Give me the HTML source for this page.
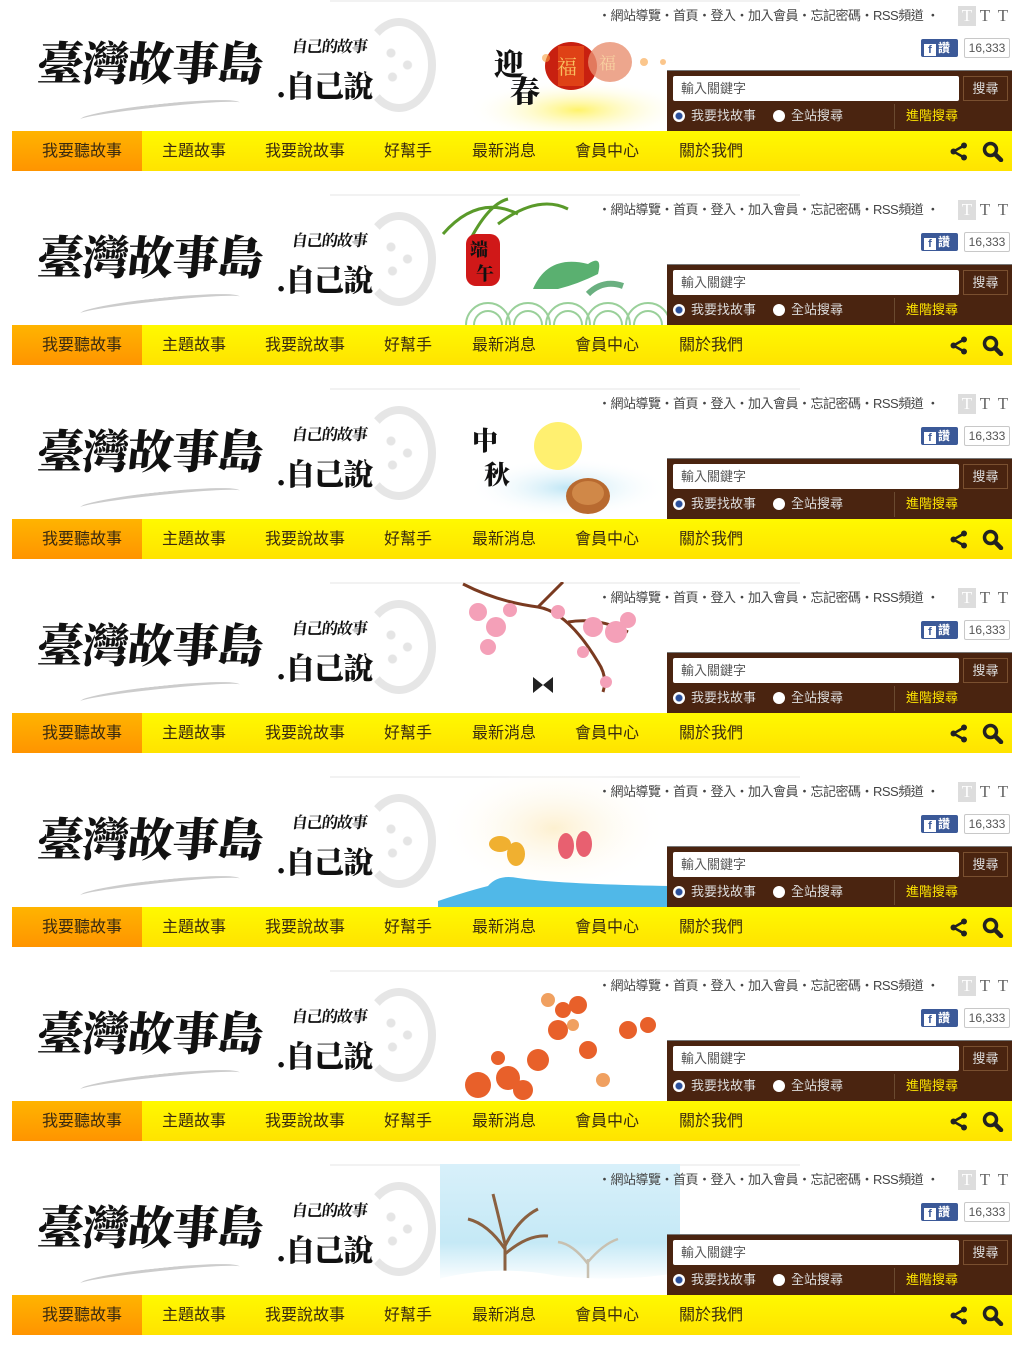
<!DOCTYPE html>
<html><head><meta charset="utf-8"><style>
*{margin:0;padding:0;box-sizing:border-box}
body{width:1024px;height:1336px;background:#fff;font-family:"Liberation Sans","Noto Sans CJK TC",sans-serif;position:relative;overflow:hidden}
.b{position:absolute;left:0;width:1024px;height:194px}
.topline{position:absolute;left:330px;top:0;width:470px;height:2px;background:#f2f2f2}
.deco{position:absolute;left:438px;top:0;width:232px;height:131px;overflow:hidden}
.links{position:absolute;left:598px;top:5px;font-size:13px;color:#444;white-space:nowrap;letter-spacing:-0.5px}
.ttt{position:absolute;left:958px;top:6px;height:18px;font-family:"Liberation Serif",serif;font-size:17px;color:#666}
.ttt span{display:inline-block;width:18px;text-align:center}
.ttt span.a{background:#ddd;color:#fff}
.fb{position:absolute;left:921px;top:39px;width:37px;height:18px;background:#3b5998;border-radius:2px;color:#fff;font-size:12px;font-weight:bold;line-height:18px;padding-left:3px}
.fb i{display:inline-block;width:12px;height:12px;background:#fff;color:#3b5998;font-style:normal;font-size:11px;line-height:13px;text-align:center;vertical-align:-1px;margin-right:2px}
.cnt{position:absolute;left:964px;top:38px;width:46px;height:20px;border:1px solid #c8c8c8;border-radius:2px;font-size:12px;color:#555;line-height:18px;text-align:center}
.sp{position:absolute;left:667px;top:70px;width:345px;height:61px;background:#4a2410;border-top:1px solid #777}
.inp{position:absolute;left:6px;top:5px;width:286px;height:25px;background:#fff;border-radius:2px;font-size:13px;color:#555;line-height:25px;padding-left:8px}
.btn{position:absolute;left:296px;top:5px;width:45px;height:25px;border:1px solid #7a5030;font-size:13px;color:#ddd;line-height:23px;text-align:center}
.r{position:absolute;top:37px;font-size:13px;color:#ddd;line-height:16px}
.r i{display:inline-block;width:12px;height:12px;border-radius:50%;background:#fff;vertical-align:-2px;margin-right:6px}
.r i.on{background:radial-gradient(circle,#2a4f9a 0 3px,#fff 4px)}
.div{position:absolute;left:227px;top:33px;width:1px;height:25px;background:#6a4a30}
.adv{position:absolute;left:239px;top:37px;font-size:13px;color:#ffe600;line-height:16px}
.nav{position:absolute;left:12px;top:131px;width:1000px;height:40px;background:linear-gradient(#fff900,#ffe300)}
.nav .o{position:absolute;left:0;top:0;width:130px;height:40px;background:linear-gradient(#ffb400,#ff9400)}
.nav span{position:absolute;top:11px;font-size:16px;color:#3a2a10;line-height:20px}
.logo{position:absolute;left:38px;top:30px;font-family:"Noto Serif CJK SC",serif;font-weight:900;font-size:46px;line-height:62px;color:#111;letter-spacing:-1px;transform:skewX(-6deg);white-space:nowrap}
.logo2{position:absolute;left:276px;top:64px;font-family:"Noto Serif CJK SC",serif;font-weight:900;font-size:30px;line-height:40px;color:#111;letter-spacing:-1px;white-space:nowrap}
.logo3{position:absolute;left:292px;top:34px;font-family:"Noto Serif CJK SC",serif;font-weight:700;font-size:16px;line-height:24px;color:#111;letter-spacing:-1px;transform:skewX(-8deg)}
.circ{position:absolute;left:362px;top:18px;width:74px;height:94px;border:8px solid #e6e6e6;border-radius:50%;border-left-color:transparent}
.dots{position:absolute;left:385px;top:45px;width:30px;height:40px;background:radial-gradient(circle at 20% 20%,#e5e5e5 4px,transparent 5px),radial-gradient(circle at 75% 50%,#e5e5e5 4px,transparent 5px),radial-gradient(circle at 25% 80%,#e5e5e5 4px,transparent 5px)}
.swoosh{position:absolute;left:80px;top:104px;width:160px;height:14px;border-radius:50%;border-top:3px solid #ccc;transform:rotate(-6deg)}
</style></head><body>

<div class="b" style="top:0">
<div class="topline"></div>
<div class="deco"><svg width="232" height="131">
<defs><radialGradient id="g1"><stop offset="0" stop-color="#fff36a"/><stop offset="1" stop-color="#fff" stop-opacity="0"/></radialGradient></defs>
<ellipse cx="140" cy="110" rx="110" ry="30" fill="url(#g1)"/>
<text x="56" y="75" font-family="Noto Serif CJK SC" font-weight="900" font-size="30" fill="#111">迎</text>
<text x="72" y="102" font-family="Noto Serif CJK SC" font-weight="900" font-size="30" fill="#111">春</text>
<ellipse cx="133" cy="66" rx="26" ry="24" fill="#c82010"/><rect x="120" y="46" width="26" height="40" fill="#e8501a" opacity=".7"/>
<text x="119" y="74" font-size="20" fill="#f8c060" font-family="Noto Serif CJK SC">福</text>
<ellipse cx="172" cy="62" rx="22" ry="20" fill="#e89070" opacity=".8"/>
<text x="161" y="69" font-size="17" fill="#f8d0a0" font-family="Noto Serif CJK SC">福</text>
<circle cx="108" cy="58" r="4" fill="#f8a040" opacity=".6"/><circle cx="206" cy="62" r="4" fill="#f8a040" opacity=".6"/><circle cx="225" cy="62" r="3" fill="#f8a040" opacity=".6"/>
</svg></div>
<div class="links">・網站導覽・首頁・登入・加入會員・忘記密碼・RSS頻道 ・</div>
<div class="ttt"><span class="a">T</span><span>T</span><span>T</span></div>
<div class="fb"><i>f</i>讚</div><div class="cnt">16,333</div>
<div class="circ"></div><div class="dots"></div><div class="swoosh"></div>
<div class="logo">臺灣故事島</div><div class="logo3">自己的故事</div><div class="logo2">.自己說</div>
<div class="sp"><div class="inp">輸入關鍵字</div><div class="btn">搜尋</div><div class="r" style="left:6px"><i class="on"></i>我要找故事</div><div class="r" style="left:106px"><i></i>全站搜尋</div><div class="div"></div><div class="adv">進階搜尋</div></div>
<div class="nav"><div class="o"></div><span style="left:30px">我要聽故事</span><span style="left:150px">主題故事</span><span style="left:253px">我要說故事</span><span style="left:372px">好幫手</span><span style="left:460px">最新消息</span><span style="left:563px">會員中心</span><span style="left:667px">關於我們</span>
<svg style="position:absolute;left:938px;top:11px" width="18" height="19"><circle cx="14" cy="3.5" r="3" fill="#222"/><circle cx="3.5" cy="9.5" r="3" fill="#222"/><circle cx="14" cy="15.5" r="3" fill="#222"/><path d="M14 3.5L3.5 9.5L14 15.5" stroke="#222" stroke-width="2.5" fill="none"/></svg>
<svg style="position:absolute;left:970px;top:10px" width="22" height="21"><circle cx="8.5" cy="8.5" r="6" stroke="#222" stroke-width="3.5" fill="none"/><path d="M13 13L19 19" stroke="#222" stroke-width="4.5" stroke-linecap="round"/></svg></div>
</div>

<div class="b" style="top:194px">
<div class="topline"></div>
<div class="deco"><svg width="232" height="131">
<path d="M5 40Q40 0 80 20M30 50Q50 10 70 5M60 30Q100 0 130 15" stroke="#5a9a2a" stroke-width="3" fill="none"/>
<rect x="28" y="40" width="34" height="52" rx="10" fill="#d01818"/>
<text x="32" y="62" font-size="18" fill="#111" font-family="Noto Serif CJK SC" font-weight="900">端</text><text x="38" y="86" font-size="18" fill="#111" font-family="Noto Serif CJK SC" font-weight="900">午</text>
<path d="M95 95Q110 60 150 70Q165 60 160 80Q140 90 120 95Z" fill="#5ab070"/>
<path d="M150 100Q165 85 185 92" stroke="#6ab080" stroke-width="6" fill="none"/>
<g fill="none" stroke="#9ad09a" stroke-width="2"><circle cx="50" cy="131" r="22"/><circle cx="90" cy="131" r="22"/><circle cx="130" cy="131" r="22"/><circle cx="170" cy="131" r="22"/><circle cx="210" cy="131" r="22"/><circle cx="50" cy="131" r="14"/><circle cx="90" cy="131" r="14"/><circle cx="130" cy="131" r="14"/><circle cx="170" cy="131" r="14"/><circle cx="210" cy="131" r="14"/></g>
</svg></div>
<div class="links">・網站導覽・首頁・登入・加入會員・忘記密碼・RSS頻道 ・</div>
<div class="ttt"><span class="a">T</span><span>T</span><span>T</span></div>
<div class="fb"><i>f</i>讚</div><div class="cnt">16,333</div>
<div class="circ"></div><div class="dots"></div><div class="swoosh"></div>
<div class="logo">臺灣故事島</div><div class="logo3">自己的故事</div><div class="logo2">.自己說</div>
<div class="sp"><div class="inp">輸入關鍵字</div><div class="btn">搜尋</div><div class="r" style="left:6px"><i class="on"></i>我要找故事</div><div class="r" style="left:106px"><i></i>全站搜尋</div><div class="div"></div><div class="adv">進階搜尋</div></div>
<div class="nav"><div class="o"></div><span style="left:30px">我要聽故事</span><span style="left:150px">主題故事</span><span style="left:253px">我要說故事</span><span style="left:372px">好幫手</span><span style="left:460px">最新消息</span><span style="left:563px">會員中心</span><span style="left:667px">關於我們</span>
<svg style="position:absolute;left:938px;top:11px" width="18" height="19"><circle cx="14" cy="3.5" r="3" fill="#222"/><circle cx="3.5" cy="9.5" r="3" fill="#222"/><circle cx="14" cy="15.5" r="3" fill="#222"/><path d="M14 3.5L3.5 9.5L14 15.5" stroke="#222" stroke-width="2.5" fill="none"/></svg>
<svg style="position:absolute;left:970px;top:10px" width="22" height="21"><circle cx="8.5" cy="8.5" r="6" stroke="#222" stroke-width="3.5" fill="none"/><path d="M13 13L19 19" stroke="#222" stroke-width="4.5" stroke-linecap="round"/></svg></div>
</div>

<div class="b" style="top:388px">
<div class="topline"></div>
<div class="deco"><svg width="232" height="131">
<defs><radialGradient id="g3"><stop offset="0" stop-color="#bfe6f5"/><stop offset="1" stop-color="#fff" stop-opacity="0"/></radialGradient></defs>
<ellipse cx="130" cy="100" rx="100" ry="30" fill="url(#g3)"/>
<circle cx="120" cy="58" r="24" fill="#fff070"/>
<text x="34" y="62" font-size="26" fill="#111" font-family="Noto Serif CJK SC" font-weight="900">中</text><text x="46" y="96" font-size="26" fill="#111" font-family="Noto Serif CJK SC" font-weight="900">秋</text>
<ellipse cx="150" cy="108" rx="22" ry="18" fill="#b86a30"/><ellipse cx="150" cy="105" rx="16" ry="12" fill="#d08848"/>
</svg></div>
<div class="links">・網站導覽・首頁・登入・加入會員・忘記密碼・RSS頻道 ・</div>
<div class="ttt"><span class="a">T</span><span>T</span><span>T</span></div>
<div class="fb"><i>f</i>讚</div><div class="cnt">16,333</div>
<div class="circ"></div><div class="dots"></div><div class="swoosh"></div>
<div class="logo">臺灣故事島</div><div class="logo3">自己的故事</div><div class="logo2">.自己說</div>
<div class="sp"><div class="inp">輸入關鍵字</div><div class="btn">搜尋</div><div class="r" style="left:6px"><i class="on"></i>我要找故事</div><div class="r" style="left:106px"><i></i>全站搜尋</div><div class="div"></div><div class="adv">進階搜尋</div></div>
<div class="nav"><div class="o"></div><span style="left:30px">我要聽故事</span><span style="left:150px">主題故事</span><span style="left:253px">我要說故事</span><span style="left:372px">好幫手</span><span style="left:460px">最新消息</span><span style="left:563px">會員中心</span><span style="left:667px">關於我們</span>
<svg style="position:absolute;left:938px;top:11px" width="18" height="19"><circle cx="14" cy="3.5" r="3" fill="#222"/><circle cx="3.5" cy="9.5" r="3" fill="#222"/><circle cx="14" cy="15.5" r="3" fill="#222"/><path d="M14 3.5L3.5 9.5L14 15.5" stroke="#222" stroke-width="2.5" fill="none"/></svg>
<svg style="position:absolute;left:970px;top:10px" width="22" height="21"><circle cx="8.5" cy="8.5" r="6" stroke="#222" stroke-width="3.5" fill="none"/><path d="M13 13L19 19" stroke="#222" stroke-width="4.5" stroke-linecap="round"/></svg></div>
</div>

<div class="b" style="top:582px">
<div class="topline"></div>
<div class="deco"><svg width="232" height="131">
<path d="M25 2Q60 20 100 25Q130 30 160 80Q170 95 165 110M100 25Q115 10 125 0M130 40Q160 35 190 50" stroke="#7a3a20" stroke-width="3" fill="none"/>
<g fill="#f4a0b8"><circle cx="40" cy="30" r="9"/><circle cx="58" cy="45" r="10"/><circle cx="50" cy="65" r="8"/><circle cx="72" cy="28" r="7"/><circle cx="120" cy="30" r="7"/><circle cx="155" cy="45" r="10"/><circle cx="178" cy="50" r="11"/><circle cx="190" cy="38" r="8"/><circle cx="168" cy="100" r="6"/><circle cx="145" cy="70" r="6"/></g>
<path d="M95 95l10 8-10 8zM115 95l-10 8 10 8z" fill="#222"/>
</svg></div>
<div class="links">・網站導覽・首頁・登入・加入會員・忘記密碼・RSS頻道 ・</div>
<div class="ttt"><span class="a">T</span><span>T</span><span>T</span></div>
<div class="fb"><i>f</i>讚</div><div class="cnt">16,333</div>
<div class="circ"></div><div class="dots"></div><div class="swoosh"></div>
<div class="logo">臺灣故事島</div><div class="logo3">自己的故事</div><div class="logo2">.自己說</div>
<div class="sp"><div class="inp">輸入關鍵字</div><div class="btn">搜尋</div><div class="r" style="left:6px"><i class="on"></i>我要找故事</div><div class="r" style="left:106px"><i></i>全站搜尋</div><div class="div"></div><div class="adv">進階搜尋</div></div>
<div class="nav"><div class="o"></div><span style="left:30px">我要聽故事</span><span style="left:150px">主題故事</span><span style="left:253px">我要說故事</span><span style="left:372px">好幫手</span><span style="left:460px">最新消息</span><span style="left:563px">會員中心</span><span style="left:667px">關於我們</span>
<svg style="position:absolute;left:938px;top:11px" width="18" height="19"><circle cx="14" cy="3.5" r="3" fill="#222"/><circle cx="3.5" cy="9.5" r="3" fill="#222"/><circle cx="14" cy="15.5" r="3" fill="#222"/><path d="M14 3.5L3.5 9.5L14 15.5" stroke="#222" stroke-width="2.5" fill="none"/></svg>
<svg style="position:absolute;left:970px;top:10px" width="22" height="21"><circle cx="8.5" cy="8.5" r="6" stroke="#222" stroke-width="3.5" fill="none"/><path d="M13 13L19 19" stroke="#222" stroke-width="4.5" stroke-linecap="round"/></svg></div>
</div>

<div class="b" style="top:776px">
<div class="topline"></div>
<div class="deco"><svg width="232" height="131">
<defs><radialGradient id="g5" cx=".5" cy=".4"><stop offset="0" stop-color="#fdf0d0"/><stop offset="1" stop-color="#fff" stop-opacity="0"/></radialGradient></defs>
<rect width="232" height="131" fill="url(#g5)"/>
<ellipse cx="62" cy="68" rx="11" ry="8" fill="#f0b030"/><ellipse cx="78" cy="78" rx="9" ry="12" fill="#f0b030"/>
<ellipse cx="128" cy="70" rx="8" ry="13" fill="#e86070"/><ellipse cx="146" cy="68" rx="8" ry="13" fill="#e86070"/>
<path d="M0 131L0 125Q30 115 50 110Q60 98 80 102Q120 108 232 110L232 131Z" fill="#50b8e8"/>
</svg></div>
<div class="links">・網站導覽・首頁・登入・加入會員・忘記密碼・RSS頻道 ・</div>
<div class="ttt"><span class="a">T</span><span>T</span><span>T</span></div>
<div class="fb"><i>f</i>讚</div><div class="cnt">16,333</div>
<div class="circ"></div><div class="dots"></div><div class="swoosh"></div>
<div class="logo">臺灣故事島</div><div class="logo3">自己的故事</div><div class="logo2">.自己說</div>
<div class="sp"><div class="inp">輸入關鍵字</div><div class="btn">搜尋</div><div class="r" style="left:6px"><i class="on"></i>我要找故事</div><div class="r" style="left:106px"><i></i>全站搜尋</div><div class="div"></div><div class="adv">進階搜尋</div></div>
<div class="nav"><div class="o"></div><span style="left:30px">我要聽故事</span><span style="left:150px">主題故事</span><span style="left:253px">我要說故事</span><span style="left:372px">好幫手</span><span style="left:460px">最新消息</span><span style="left:563px">會員中心</span><span style="left:667px">關於我們</span>
<svg style="position:absolute;left:938px;top:11px" width="18" height="19"><circle cx="14" cy="3.5" r="3" fill="#222"/><circle cx="3.5" cy="9.5" r="3" fill="#222"/><circle cx="14" cy="15.5" r="3" fill="#222"/><path d="M14 3.5L3.5 9.5L14 15.5" stroke="#222" stroke-width="2.5" fill="none"/></svg>
<svg style="position:absolute;left:970px;top:10px" width="22" height="21"><circle cx="8.5" cy="8.5" r="6" stroke="#222" stroke-width="3.5" fill="none"/><path d="M13 13L19 19" stroke="#222" stroke-width="4.5" stroke-linecap="round"/></svg></div>
</div>

<div class="b" style="top:970px">
<div class="topline"></div>
<div class="deco"><svg width="232" height="131">
<g fill="#e8602a"><circle cx="40" cy="115" r="13"/><circle cx="70" cy="108" r="12"/><circle cx="100" cy="90" r="11"/><circle cx="120" cy="60" r="10"/><circle cx="140" cy="35" r="9"/><circle cx="125" cy="40" r="8"/><circle cx="150" cy="80" r="9"/><circle cx="190" cy="60" r="9"/><circle cx="210" cy="55" r="8"/><circle cx="60" cy="88" r="7"/><circle cx="85" cy="120" r="10"/></g>
<g fill="#f0a060"><circle cx="110" cy="30" r="7"/><circle cx="135" cy="55" r="6"/><circle cx="165" cy="110" r="7"/></g>
</svg></div>
<div class="links">・網站導覽・首頁・登入・加入會員・忘記密碼・RSS頻道 ・</div>
<div class="ttt"><span class="a">T</span><span>T</span><span>T</span></div>
<div class="fb"><i>f</i>讚</div><div class="cnt">16,333</div>
<div class="circ"></div><div class="dots"></div><div class="swoosh"></div>
<div class="logo">臺灣故事島</div><div class="logo3">自己的故事</div><div class="logo2">.自己說</div>
<div class="sp"><div class="inp">輸入關鍵字</div><div class="btn">搜尋</div><div class="r" style="left:6px"><i class="on"></i>我要找故事</div><div class="r" style="left:106px"><i></i>全站搜尋</div><div class="div"></div><div class="adv">進階搜尋</div></div>
<div class="nav"><div class="o"></div><span style="left:30px">我要聽故事</span><span style="left:150px">主題故事</span><span style="left:253px">我要說故事</span><span style="left:372px">好幫手</span><span style="left:460px">最新消息</span><span style="left:563px">會員中心</span><span style="left:667px">關於我們</span>
<svg style="position:absolute;left:938px;top:11px" width="18" height="19"><circle cx="14" cy="3.5" r="3" fill="#222"/><circle cx="3.5" cy="9.5" r="3" fill="#222"/><circle cx="14" cy="15.5" r="3" fill="#222"/><path d="M14 3.5L3.5 9.5L14 15.5" stroke="#222" stroke-width="2.5" fill="none"/></svg>
<svg style="position:absolute;left:970px;top:10px" width="22" height="21"><circle cx="8.5" cy="8.5" r="6" stroke="#222" stroke-width="3.5" fill="none"/><path d="M13 13L19 19" stroke="#222" stroke-width="4.5" stroke-linecap="round"/></svg></div>
</div>

<div class="b" style="top:1164px">
<div class="topline"></div>
<div style="position:absolute;left:440px;top:0;width:240px;height:131px;background:linear-gradient(180deg,#d8f0fa,#c5e9f6 60%,#fff 90%)"></div>
<div class="deco"><svg width="232" height="131">
<path d="M67 110L67 80M67 85Q50 60 30 55M67 82Q80 55 100 45M67 90Q90 70 110 72M67 80Q60 50 55 30" stroke="#8a6040" stroke-width="3" fill="none"/>
<path d="M150 118L150 95M150 100Q135 80 120 78M150 98Q165 80 180 75" stroke="#c8c0b0" stroke-width="2.5" fill="none"/>
<path d="M0 131L0 115Q60 100 120 112Q180 118 232 110L232 131Z" fill="#fff"/>
</svg></div>
<div class="links">・網站導覽・首頁・登入・加入會員・忘記密碼・RSS頻道 ・</div>
<div class="ttt"><span class="a">T</span><span>T</span><span>T</span></div>
<div class="fb"><i>f</i>讚</div><div class="cnt">16,333</div>
<div class="circ"></div><div class="dots"></div><div class="swoosh"></div>
<div class="logo">臺灣故事島</div><div class="logo3">自己的故事</div><div class="logo2">.自己說</div>
<div class="sp"><div class="inp">輸入關鍵字</div><div class="btn">搜尋</div><div class="r" style="left:6px"><i class="on"></i>我要找故事</div><div class="r" style="left:106px"><i></i>全站搜尋</div><div class="div"></div><div class="adv">進階搜尋</div></div>
<div class="nav"><div class="o"></div><span style="left:30px">我要聽故事</span><span style="left:150px">主題故事</span><span style="left:253px">我要說故事</span><span style="left:372px">好幫手</span><span style="left:460px">最新消息</span><span style="left:563px">會員中心</span><span style="left:667px">關於我們</span>
<svg style="position:absolute;left:938px;top:11px" width="18" height="19"><circle cx="14" cy="3.5" r="3" fill="#222"/><circle cx="3.5" cy="9.5" r="3" fill="#222"/><circle cx="14" cy="15.5" r="3" fill="#222"/><path d="M14 3.5L3.5 9.5L14 15.5" stroke="#222" stroke-width="2.5" fill="none"/></svg>
<svg style="position:absolute;left:970px;top:10px" width="22" height="21"><circle cx="8.5" cy="8.5" r="6" stroke="#222" stroke-width="3.5" fill="none"/><path d="M13 13L19 19" stroke="#222" stroke-width="4.5" stroke-linecap="round"/></svg></div>
</div>

</body></html>
